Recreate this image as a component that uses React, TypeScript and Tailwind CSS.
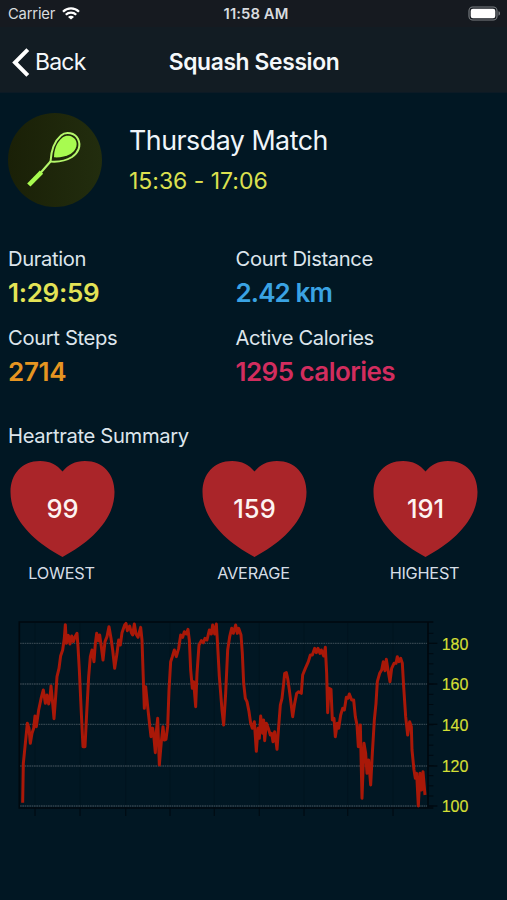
import React from "react";

const HEART_RATE_TRACE =
  "38,578 40,460 46,400 52,340 57,355 61,400 66,370 71,355 75,318 79,350 86,300 94,262 100,240 106,280 111,255 116,282 120,262 123,228 128,280 132,326 137,260 141,200 147,175 152,137 158,120 163,84 166,44 169,100 175,76 180,102 185,78 190,95 195,80 201,70 204,110 208,180 214,310 219,410 225,410 230,310 236,200 241,140 246,120 252,155 256,100 260,70 265,92 269,75 274,110 279,150 285,95 291,80 297,50 303,85 308,120 314,175 321,130 326,90 331,105 336,68 344,45 348,40 352,62 359,48 364,68 368,75 373,42 378,72 384,82 387,70 392,52 396,90 399,180 403,295 407,230 413,290 419,345 423,380 428,355 432,385 436,428 439,365 443,325 448,465 454,395 459,350 463,390 468,388 473,350 477,240 482,155 487,140 493,120 499,140 506,115 512,75 518,82 523,65 529,72 534,58 538,90 542,180 547,235 551,215 557,290 561,190 567,105 574,92 580,98 585,85 591,90 598,60 604,72 608,45 614,72 619,42 622,90 628,200 636,300 641,345 647,250 653,120 659,80 665,55 670,70 677,45 682,70 686,55 693,75 697,130 701,220 706,265 711,275 717,305 722,340 727,355 733,335 739,424 744,355 748,385 752,318 758,370 761,330 764,392 769,340 775,355 781,375 785,370 789,395 794,365 801,418 806,350 811,285 816,265 821,220 824,190 829,188 833,205 838,240 843,280 848,320 854,280 860,250 866,245 874,250 878,195 886,175 895,155 901,135 907,135 914,115 919,128 924,115 930,130 934,120 941,138 946,112 950,190 953,308 957,235 963,238 967,330 972,325 976,380 982,340 986,355 992,315 998,295 1003,300 1009,262 1014,265 1018,252 1025,270 1031,270 1036,320 1041,345 1045,410 1051,345 1056,565 1062,400 1067,430 1071,490 1076,450 1082,525 1087,430 1093,330 1098,280 1102,215 1109,190 1115,180 1120,155 1125,182 1129,148 1134,180 1140,215 1145,175 1152,160 1158,160 1162,140 1167,155 1172,145 1177,160 1181,230 1187,320 1193,375 1199,335 1204,350 1206,420 1212,480 1216,505 1220,490 1225,588 1230,490 1235,540 1239,485 1245,555";

const GRID_LINES = [
  { label: "180", y: 100 },
  { label: "160", y: 222 },
  { label: "140", y: 343 },
  { label: "120", y: 468 },
  { label: "100", y: 588 },
];

const X_TICKS = [75, 210, 347, 480, 613, 748, 882, 1013, 1149];
const MINOR_TICKS = Array.from({ length: 18 }, (_, i) => 70 + i * 30.5);

function StatusBar() {
  return (
    <div className="flex h-[27px] items-center bg-[#161a20] pl-2 pr-[6px] text-[#d9dcdf]">
      <div className="flex flex-1 items-center">
        <span className="pt-px text-[14.800px] tracking-[-0.2px]">Carrier</span>
        <svg className="ml-[7px] h-[13px] w-[18px]" viewBox="0 0 18 13" fill="none" stroke="#fff" strokeWidth="2.3">
          <path d="M1 4.7a11.4 11.4 0 0 1 16 0" />
          <path d="M3.8 7.7a7.4 7.4 0 0 1 10.4 0" />
          <path d="M9 12.6 6 9.9a4.2 4.2 0 0 1 6 0Z" fill="#fff" stroke="none" />
        </svg>
      </div>
      <span className="pl-[3px] pt-[2px] text-[14.800px] font-semibold tracking-[0.1px]">11:58 AM</span>
      <div className="flex flex-1 justify-end">
        <svg className="h-[15px] w-[33px]" viewBox="0 0 33 15">
          <rect x="1" y="1" width="28" height="13" rx="3.8" fill="none" stroke="#7c8084" strokeWidth="1.1" />
          <rect x="2.7" y="2.7" width="24.6" height="9.6" rx="2.2" fill="#fff" />
          <path d="M30.5 5.3c2 .6 2 3.8 0 4.4Z" fill="#7c8084" />
        </svg>
      </div>
    </div>
  );
}

function NavBar() {
  return (
    <div className="flex h-[66px] items-center border-b border-[#0c1a25] bg-[#121c23] px-3 pt-[5px] text-[23px] leading-none text-[#f5f8fa]">
      <div className="flex flex-1 items-center">
        <svg className="h-[29px] w-[18px]" viewBox="0 0 18 29" fill="none" stroke="#fff" strokeWidth="4">
          <path d="M15.8 1.6 3 14.5l12.8 12.9" />
        </svg>
        <span className="ml-[5px] pt-px tracking-[-0.8px]">Back</span>
      </div>
      <h1 className="pl-[1px] pt-px text-[22.800px] font-semibold tracking-[-0.35px]">Squash Session</h1>
      <div className="flex-1" />
    </div>
  );
}

function SessionHeader() {
  return (
    <div className="flex items-center gap-[27px] pl-2">
      <div className="h-[94px] w-[94px] rounded-full bg-linear-to-r from-[#1a2007] to-[#222d0e]">
        <svg className="h-full w-full" viewBox="0 0 94 94">
          <path
            d="M42.500 48.500C43 40 45.500 29 53 22.500C58 18 67 20 70 26C73.500 33 70 40 64 44C57.500 48 49 49 42.500 48.500Z"
            fill="none"
            stroke="#b5f76b"
            strokeWidth="2"
            strokeLinejoin="round"
          />
          <path d="M46 44.300C46 37 48.500 29.500 54.500 24.500C59 21 66 23 68 28C70 33 67 38 62.500 41C58 43.500 51.500 44.700 46 44.300Z" fill="#a8fb50" />
          <path d="M42.500 48.500 32 60.500" fill="none" stroke="#b5f76b" strokeWidth="2" />
          <path d="M33.500 59.200 20.800 72" fill="none" stroke="#a8fb50" strokeWidth="4.600" />
        </svg>
      </div>
      <div className="flex flex-col pt-px">
        <h2 className="h-[41px] text-[26.800px] leading-10 tracking-[-0.5px] text-[#eff5fa]">Thursday Match</h2>
        <p className="h-10 text-[23px] leading-10 tracking-[-0.02px] text-[#dce04f]">15:36 - 17:06</p>
      </div>
    </div>
  );
}

function Stat({ label, value, color }: { label: string; value: string; color: string }) {
  return (
    <div className="h-[78.5px]">
      <div className="h-[34px] text-[20.200px] leading-[34px] tracking-[-0.35px] text-[#dde5ec]">{label}</div>
      <div className={`h-[34px] text-[26px] font-semibold leading-[34px] ${color}`}>{value}</div>
    </div>
  );
}

function HeartStat({ value, label }: { value: string; label: string }) {
  return (
    <div className="flex w-[105px] flex-col items-center">
      <div className="grid h-[96px] w-[105px] place-items-center">
        <svg className="col-start-1 row-start-1 h-full w-full" viewBox="0 0 105 96">
          <path
            d="M52.500 10.500C58 4 65 0 75 0C93 0 104.500 13 104.500 31C104.500 58 82 80 52.500 96C23 80 .500 58 .500 31C.500 13 12 0 30 0C40 0 47 4 52.500 10.500Z"
            fill="#aa2529"
          />
        </svg>
        <span className="col-start-1 row-start-1 text-[25.500px] font-[550] text-[#fdf3f1]">{value}</span>
      </div>
      <span className="mt-1 h-[25px] pr-[2px] text-[16.300px] leading-6 tracking-[-0.25px] text-[#d6dee6]">{label}</span>
    </div>
  );
}

function HeartRateChart() {
  return (
    <svg className="ml-[10px] mt-6 block h-[215px] w-[480px]" viewBox="0 0 1440 645">
      {X_TICKS.map((x) => (
        <g key={x} fill="none" stroke="#000c14">
          <path d={`M${x} 38V592`} strokeWidth="2" opacity="0.4" />
          <path d={`M${x} 592V618`} strokeWidth="4" />
        </g>
      ))}
      {GRID_LINES.map(({ label, y }) => (
        <g key={label}>
          <path d={`M30 ${y}H1252`} stroke="#32434d" strokeWidth="4" strokeDasharray="5 2" />
          <path d={`M1254 ${y}H1282`} stroke="#000a11" strokeWidth="4" />
          <text
            x="1295"
            y={y + 19}
            fill="#d3df35"
            stroke="#d3df35"
            strokeWidth="0.5"
            fontFamily="'Liberation Sans', Arial, sans-serif"
            fontSize="48"
          >
            {label}
          </text>
        </g>
      ))}
      {MINOR_TICKS.map((y) => (
        <path key={y} d={`M1254 ${y}H1270`} stroke="#000a11" strokeWidth="3" />
      ))}
      <path d="M28 36H1270M28 594H1270M28 34V596M1254 34V596" fill="none" stroke="#00090f" strokeWidth="5" />
      <polyline points={HEART_RATE_TRACE} fill="none" stroke="#a91808" strokeWidth="9" strokeLinejoin="round" />
    </svg>
  );
}

export default function App() {
  return (
    <div className="h-[900px] w-[507px] overflow-hidden bg-[#011723] font-['Inter',sans-serif]">
      <StatusBar />
      <NavBar />
      <main className="flex flex-col pt-5">
        <SessionHeader />
        <div className="mt-[35px] grid grid-cols-[227.500px_1fr] pl-2">
          <Stat label="Duration" value="1:29:59" color="text-[#e3e356] tracking-[-0.3px]" />
          <Stat label="Court Distance" value="2.42 km" color="text-[#3aa3e3] tracking-[-0.9px]" />
          <Stat label="Court Steps" value="2714" color="text-[#e69521] tracking-[-0.3px]" />
          <Stat label="Active Calories" value="1295 calories" color="text-[#d22d5e] tracking-[-0.55px]" />
        </div>
        <h3 className="mt-[20px] h-[42px] pl-2 text-[20.200px] leading-[34px] tracking-[-0.33px] text-[#dde5ec]">
          Heartrate Summary
        </h3>
        <div className="flex justify-between pl-[10px] pr-[29px]">
          <HeartStat value="99" label="LOWEST" />
          <div className="pl-[21px]">
            <HeartStat value="159" label="AVERAGE" />
          </div>
          <HeartStat value="191" label="HIGHEST" />
        </div>
        <HeartRateChart />
      </main>
    </div>
  );
}
